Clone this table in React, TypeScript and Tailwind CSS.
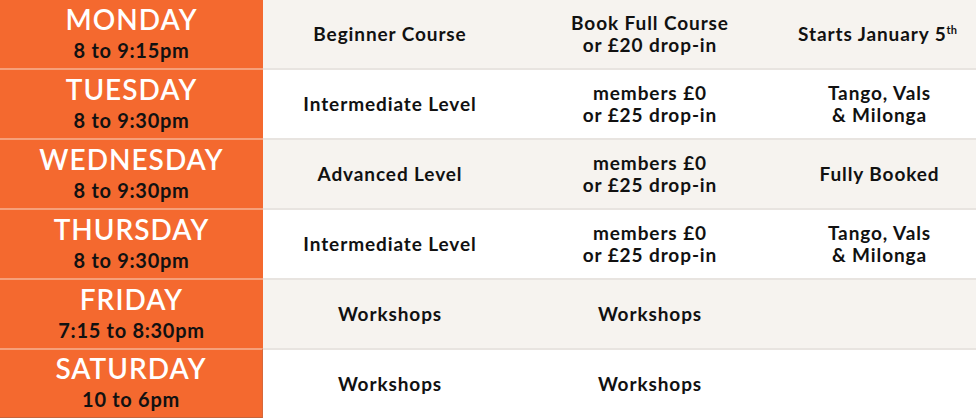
const rows = [
  {
    day: 'MONDAY',
    time: '8 to 9:15pm',
    level: ['Beginner Course'],
    price: ['Book Full Course', 'or £20 drop-in'],
    note: 'jan',
  },
  {
    day: 'TUESDAY',
    time: '8 to 9:30pm',
    level: ['Intermediate Level'],
    price: ['members £0', 'or £25 drop-in'],
    note: ['Tango, Vals', '& Milonga'],
  },
  {
    day: 'WEDNESDAY',
    time: '8 to 9:30pm',
    level: ['Advanced Level'],
    price: ['members £0', 'or £25 drop-in'],
    note: ['Fully Booked'],
  },
  {
    day: 'THURSDAY',
    time: '8 to 9:30pm',
    level: ['Intermediate Level'],
    price: ['members £0', 'or £25 drop-in'],
    note: ['Tango, Vals', '& Milonga'],
  },
  {
    day: 'FRIDAY',
    time: '7:15 to 8:30pm',
    level: ['Workshops'],
    price: ['Workshops'],
    note: [],
  },
  {
    day: 'SATURDAY',
    time: '10 to 6pm',
    level: ['Workshops'],
    price: ['Workshops'],
    note: [],
  },
]

function Lines({ lines }: { lines: string[] }) {
  return (
    <div className="flex flex-col items-center leading-[22px]">
      {lines.map((l, i) => (
        <span key={i}>{l}</span>
      ))}
    </div>
  )
}

export default function App() {
  return (
    <div
      className="w-[976px] h-[418px] flex flex-col bg-white text-[#111111] overflow-hidden"
      style={{ fontFamily: 'Lato, "Noto Sans", sans-serif' }}
    >
      {rows.map((row, i) => (
        <div
          key={row.day}
          className={`flex flex-1 ${i > 0 ? 'border-t-2 border-[#e8e4e0]' : ''} ${
            i % 2 === 0 ? 'bg-[#f6f3ef]' : 'bg-white'
          }`}
        >
          <div
            className={`w-[263px] flex flex-col items-center justify-center pb-[3px] bg-[#f4692f] ${
              i > 0 ? '-mt-[2px] border-t-2 border-[#f6a07a]' : ''
            } ${i === rows.length - 1 ? 'border-b border-r border-b-[#c8643a] border-r-[#d8683a]' : ''}`}
          >
            <span className="text-white text-[28px] font-semibold leading-[31px] tracking-[1px]">
              {row.day}
            </span>
            <span className="mt-[4px] text-[#111111] text-[20px] font-bold leading-[23px] tracking-[0.7px]">
              {row.time}
            </span>
          </div>
          <div className="w-[254px] flex items-center justify-center text-[19px] font-bold tracking-[0.9px]">
            <Lines lines={row.level} />
          </div>
          <div className="w-[266px] flex items-center justify-center text-[19px] font-bold tracking-[0.9px]">
            <Lines lines={row.price} />
          </div>
          <div className="flex-1 flex items-center justify-center text-[19px] font-bold tracking-[0.9px]">
            {row.note === 'jan' ? (
              <span className="pr-1">
                Starts January 5<sup className="text-[11px] -top-[7px] tracking-normal">th</sup>
              </span>
            ) : (
              <Lines lines={row.note as string[]} />
            )}
          </div>
        </div>
      ))}
    </div>
  )
}
